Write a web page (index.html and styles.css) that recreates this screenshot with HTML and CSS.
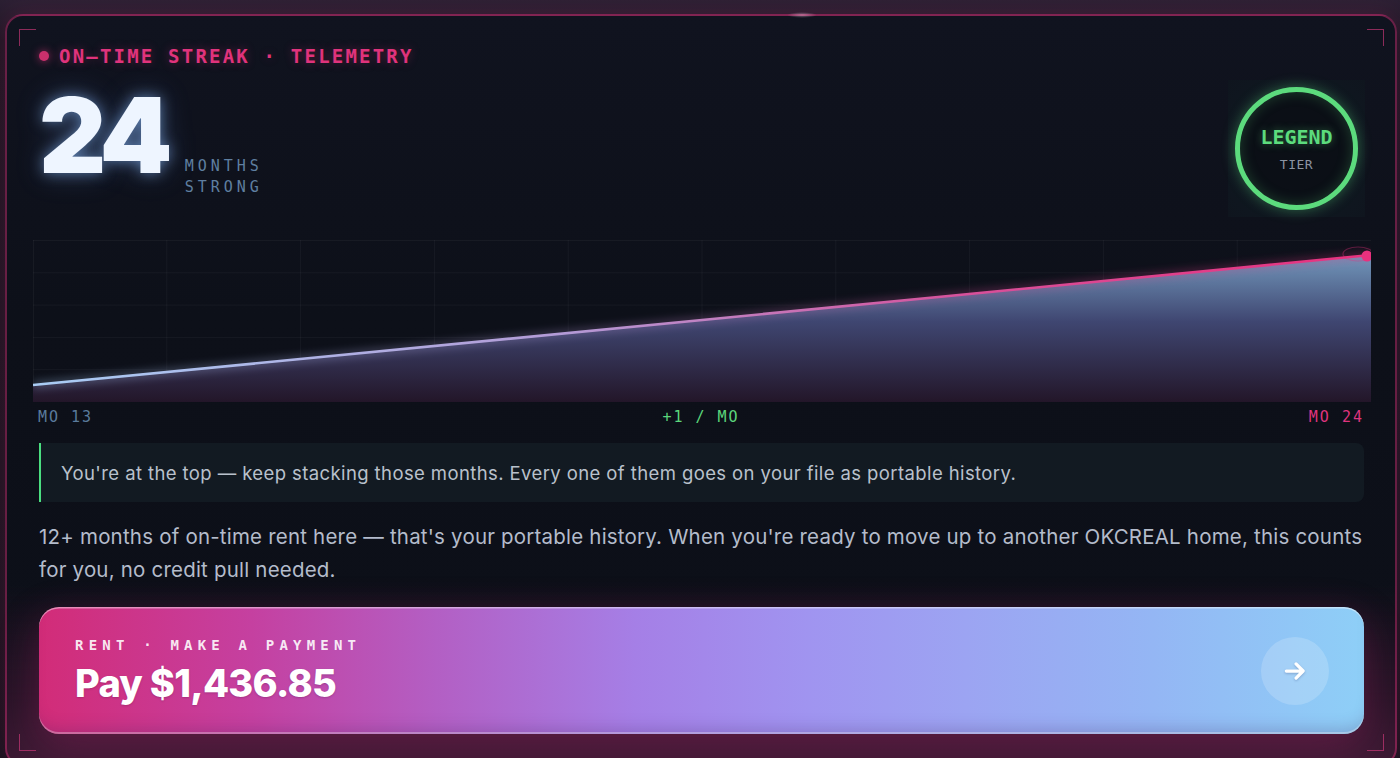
FILE: index.html
```html
<!DOCTYPE html>
<html lang="en">
<head>
<meta charset="utf-8">
<title>On-time streak</title>
<link rel="stylesheet" href="styles.css">
</head>
<body>
<div class="card">
  <span class="corner tl"></span>
  <span class="corner tr"></span>
  <span class="corner bl"></span>
  <span class="corner br"></span>
  <span class="glint"></span>

  <div class="eyebrow"><span class="dot"></span>ON–TIME STREAK · TELEMETRY</div>

  <div class="hero">
    <div class="hero-left">
      <div class="big">24</div>
      <div class="unit">MONTHS<br>STRONG</div>
    </div>
    <div class="badge">
      <div class="ring">
        <div class="tier-name">LEGEND</div>
        <div class="tier-sub">TIER</div>
      </div>
    </div>
  </div>

  <div class="chart">
    <svg viewBox="0 0 1338 162" preserveAspectRatio="none" width="1338" height="162">
      <defs>
        <linearGradient id="lineG" x1="0" y1="0" x2="1" y2="0">
          <stop offset="0" stop-color="#a9cdf5"/>
          <stop offset="0.4" stop-color="#b49ad6"/>
          <stop offset="0.7" stop-color="#d8509a"/>
          <stop offset="1" stop-color="#e8317e"/>
        </linearGradient>
        <linearGradient id="fillV" x1="0" y1="16" x2="0" y2="162" gradientUnits="userSpaceOnUse">
          <stop offset="0" stop-color="#7196ba"/>
          <stop offset="0.45" stop-color="#3f4671"/>
          <stop offset="1" stop-color="#231629"/>
        </linearGradient>
        <filter id="blur" x="-5%" y="-50%" width="110%" height="200%">
          <feGaussianBlur stdDeviation="4"/>
        </filter>
      </defs>
      <g class="grid">
        <line x1="0.5" y1="0" x2="0.5" y2="162"/>
        <line x1="133.8" y1="0" x2="133.8" y2="162"/>
        <line x1="267.6" y1="0" x2="267.6" y2="162"/>
        <line x1="401.4" y1="0" x2="401.4" y2="162"/>
        <line x1="535.2" y1="0" x2="535.2" y2="162"/>
        <line x1="669" y1="0" x2="669" y2="162"/>
        <line x1="802.8" y1="0" x2="802.8" y2="162"/>
        <line x1="936.6" y1="0" x2="936.6" y2="162"/>
        <line x1="1070.4" y1="0" x2="1070.4" y2="162"/>
        <line x1="1204.2" y1="0" x2="1204.2" y2="162"/>
        <line x1="0" y1="0.5" x2="1338" y2="0.5"/>
        <line x1="0" y1="32.8" x2="1338" y2="32.8"/>
        <line x1="0" y1="65.1" x2="1338" y2="65.1"/>
        <line x1="0" y1="97.4" x2="1338" y2="97.4"/>
        <line x1="0" y1="129.7" x2="1338" y2="129.7"/>
      </g>
      <polygon points="0,145 1338,15 1338,162 0,162" fill="url(#fillV)"/>
      <line x1="0" y1="145" x2="1338" y2="15" stroke="url(#lineG)" stroke-width="6" opacity="0.35" filter="url(#blur)"/>
      <line x1="0" y1="145" x2="1338" y2="15" stroke="url(#lineG)" stroke-width="2.6"/>
      <ellipse cx="1325" cy="14" rx="15" ry="7" fill="none" stroke="#e8317e" stroke-opacity="0.35" stroke-width="1.2"/>
      <circle cx="1334" cy="16" r="5.5" fill="#e8317e"/>
    </svg>
  </div>

  <div class="axis">
    <span class="ax ax-start">MO 13</span>
    <span class="ax ax-mid">+1 / MO</span>
    <span class="ax ax-end">MO 24</span>
  </div>

  <div class="quote">You're at the top — keep stacking those months. Every one of them goes on your file as portable history.</div>

  <p class="note">12+ months of on-time rent here — that's your portable history. When you're ready to move up to another OKCREAL home, this counts for you, no credit pull needed.</p>

  <button class="pay" type="button">
    <span class="pay-text">
      <span class="pay-label">RENT · MAKE A PAYMENT</span>
      <span class="pay-amount">Pay $1,436.85</span>
    </span>
    <span class="pay-arrow">
      <svg viewBox="0 0 24 24" width="26" height="26">
        <path d="M4 12h15M13 5.5l6.5 6.5-6.5 6.5" fill="none" stroke="#fff" stroke-width="3" stroke-linecap="round" stroke-linejoin="round"/>
      </svg>
    </span>
  </button>
</div>
</body>
</html>
```

FILE: styles.css
```css
* { box-sizing: border-box; }

html, body {
  margin: 0;
  height: 100%;
}

body {
  overflow: hidden;
  background:
    linear-gradient(to bottom, #2b2033 0%, #1c1522 40px, #17121d 100%);
  font-family: Inter, "Noto Sans", sans-serif;
}

.card {
  position: relative;
  margin: 14px 3px 0 5px;
  height: 752px;
  border: 2px solid rgba(214, 48, 120, 0.45);
  border-radius: 18px;
  padding: 28px 31px 0 32px;
  background:
    linear-gradient(to bottom, rgba(14,17,27,0) 0%, rgba(14,17,27,0) 76%, #2a1428 92%, #3d1a34 100%),
    linear-gradient(180deg, #10131f 0%, #0d1019 40%, #0c0f18 100%);
  box-shadow: 0 0 24px rgba(214, 48, 120, 0.18);
  display: flex;
  flex-direction: column;
}

.corner {
  position: absolute;
  width: 17px;
  height: 17px;
  border-color: rgba(224, 60, 130, 0.6);
  border-style: solid;
  border-width: 0;
}
.corner.tl { top: 13px; left: 12px; border-top-width: 1.5px; border-left-width: 1.5px; }
.corner.tr { top: 13px; right: 11px; border-top-width: 1.5px; border-right-width: 1.5px; }
.corner.bl { bottom: 13px; left: 12px; border-bottom-width: 1.5px; border-left-width: 1.5px; }
.corner.br { bottom: 13px; right: 11px; border-bottom-width: 1.5px; border-right-width: 1.5px; }

.glint {
  position: absolute;
  top: -4px;
  left: 780px;
  width: 30px;
  height: 6px;
  border-radius: 50%;
  background: radial-gradient(ellipse at center, rgba(255,200,230,0.45), rgba(255,200,230,0) 70%);
}

.eyebrow {
  display: flex;
  align-items: center;
  height: 24px;
  font-family: "DejaVu Sans Mono", monospace;
  font-weight: bold;
  font-size: 19px;
  letter-spacing: 2.2px;
  color: #e0337c;
  text-shadow: 0 0 10px rgba(224, 51, 124, 0.35);
}

.dot {
  width: 10px;
  height: 10px;
  border-radius: 50%;
  background: #c9306c;
  box-shadow: 0 0 8px rgba(224, 51, 124, 0.7);
  margin-right: 10px;
}

.hero {
  margin-top: 12px;
  display: flex;
  justify-content: space-between;
  align-items: flex-start;
}

.hero-left {
  display: flex;
  align-items: flex-start;
  gap: 17px;
}

.big {
  margin-top: 3px;
  font-family: Inter, sans-serif;
  font-weight: 900;
  font-size: 104px;
  line-height: 104px;
  letter-spacing: -5px;
  color: #eef5ff;
  text-shadow: 0 0 14px rgba(140, 190, 255, 0.55), 0 0 30px rgba(120, 170, 255, 0.25);
}

.unit {
  margin-top: 76px;
  font-family: "DejaVu Sans Mono", monospace;
  font-size: 15px;
  line-height: 21px;
  letter-spacing: 4px;
  color: #5f7fa0;
}

.badge {
  width: 137px;
  height: 137px;
  margin-right: -1px;
  display: flex;
  align-items: center;
  justify-content: center;
  background: radial-gradient(circle at center, #101a22 0%, #0f1720 65%, #0f151e 100%);
}

.ring {
  width: 123px;
  height: 123px;
  border-radius: 50%;
  border: 5.5px solid #5cdb7d;
  box-shadow: 0 0 14px rgba(92, 219, 125, 0.4), inset 0 0 14px rgba(92, 219, 125, 0.25);
  display: flex;
  flex-direction: column;
  align-items: center;
  justify-content: center;
  background: #0b0f16;
}

.tier-name {
  margin-top: 0;
  font-family: "DejaVu Sans Mono", monospace;
  font-weight: bold;
  font-size: 20px;
  line-height: 24px;
  color: #5cdb7d;
  text-shadow: 0 0 8px rgba(92, 219, 125, 0.45);
}

.tier-sub {
  margin-top: 8px;
  font-family: "DejaVu Sans Mono", monospace;
  font-size: 13px;
  line-height: 16px;
  letter-spacing: 0.5px;
  color: #8b93a2;
}

.chart {
  margin: 23px -7px 0 -6px;
  height: 162px;
}

.chart svg { display: block; }

.grid line {
  stroke: rgba(255, 255, 255, 0.045);
  stroke-width: 1;
}

.axis {
  height: 30px;
  display: flex;
  justify-content: space-between;
  align-items: center;
  font-family: "DejaVu Sans Mono", monospace;
  font-size: 15px;
  letter-spacing: 2px;
}

.ax-start { color: #5a7b9c; margin-left: -1px; }
.ax-mid { color: #5cd67c; }
.ax-end { color: #df347e; margin-right: 0; }

.quote {
  margin-top: 11px;
  height: 59px;
  display: flex;
  align-items: center;
  padding: 0 20px;
  background: #121a22;
  border-left: 2px solid #4ade80;
  border-radius: 0 8px 8px 0;
  font-size: 18.5px;
  letter-spacing: 0.4px;
  color: #b9c1cc;
}

.note {
  margin: 18px 0 0;
  font-size: 20.5px;
  line-height: 33px;
  letter-spacing: 0.2px;
  color: #b4bccb;
}

.pay {
  margin-top: 21px;
  height: 127px;
  width: 100%;
  border: 0;
  border-radius: 20px;
  padding: 0 35px 0 36px;
  display: flex;
  align-items: center;
  justify-content: space-between;
  text-align: left;
  cursor: pointer;
  font-family: Inter, sans-serif;
  color: #fff;
  background: linear-gradient(90deg, #d22c78 0%, #c540a0 16%, #b35fc4 30%, #a57fe6 45%, #a094f0 58%, #9ca4f2 70%, #94b6f4 84%, #8ecff7 100%);
  box-shadow:
    inset 0 1.5px 0 rgba(255, 255, 255, 0.45),
    inset 0 -2px 0 rgba(255, 255, 255, 0.3),
    inset 0 -14px 16px -10px rgba(60, 30, 90, 0.25),
    0 12px 40px rgba(200, 40, 120, 0.3);
}

.pay-text {
  display: flex;
  flex-direction: column;
}

.pay-label {
  font-family: "DejaVu Sans Mono", monospace;
  font-weight: bold;
  font-size: 14px;
  line-height: 18px;
  letter-spacing: 5.2px;
  color: rgba(255, 255, 255, 0.9);
}

.pay-amount {
  margin-top: 6px;
  font-weight: 800;
  font-size: 38px;
  line-height: 46px;
  letter-spacing: -0.7px;
  color: #fff;
  text-shadow: 0 1px 2px rgba(60, 20, 60, 0.25);
}

.pay-arrow {
  width: 68px;
  height: 68px;
  border-radius: 50%;
  background: rgba(255, 255, 255, 0.18);
  display: flex;
  align-items: center;
  justify-content: center;
}

.pay-arrow svg {
  filter: drop-shadow(0 1px 1px rgba(40, 60, 120, 0.3));
}
```
